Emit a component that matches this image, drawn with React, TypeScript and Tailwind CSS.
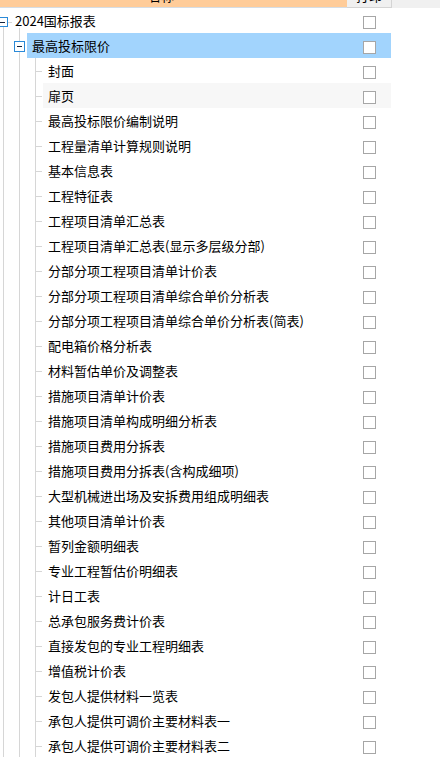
import React from "react";

const children = [
  "封面",
  "扉页",
  "最高投标限价编制说明",
  "工程量清单计算规则说明",
  "基本信息表",
  "工程特征表",
  "工程项目清单汇总表",
  "工程项目清单汇总表(显示多层级分部)",
  "分部分项工程项目清单计价表",
  "分部分项工程项目清单综合单价分析表",
  "分部分项工程项目清单综合单价分析表(简表)",
  "配电箱价格分析表",
  "材料暂估单价及调整表",
  "措施项目清单计价表",
  "措施项目清单构成明细分析表",
  "措施项目费用分拆表",
  "措施项目费用分拆表(含构成细项)",
  "大型机械进出场及安拆费用组成明细表",
  "其他项目清单计价表",
  "暂列金额明细表",
  "专业工程暂估价明细表",
  "计日工表",
  "总承包服务费计价表",
  "直接发包的专业工程明细表",
  "增值税计价表",
  "发包人提供材料一览表",
  "承包人提供可调价主要材料表一",
  "承包人提供可调价主要材料表二",
];

const LINE = "#d6d6d6";
const BOX = "#2b8ad8";
const MINUS = "#14233c";

function Checkbox() {
  return (
    <div className="w-[44px] shrink-0 pl-[16px]">
      <div className="mt-[4px] size-[13px] border border-[#a6a6a6] bg-white" />
    </div>
  );
}

function Label({ text }: { text: string }) {
  return (
    <span className="mt-[1px] flex-1 whitespace-nowrap pl-[5px] text-[13px] leading-[16px]">
      {text}
    </span>
  );
}

function RootGuide() {
  return (
    <svg width="15" height="25" className="shrink-0 overflow-visible" shapeRendering="crispEdges">
      <rect x="-1.5" y="9.5" width="9" height="9" fill="white" stroke={BOX} />
      <line x1="0" x2="5" y1="14.5" y2="14.5" stroke={MINUS} />
      <line x1="8" x2="12" y1="14.5" y2="14.5" stroke={LINE} />
      <line x1="3.5" x2="3.5" y1="19" y2="25" stroke={LINE} />
      <line x1="19.5" x2="19.5" y1="20" y2="25" stroke={LINE} />
    </svg>
  );
}

function GroupGuide() {
  return (
    <svg width="27" height="25" className="shrink-0" shapeRendering="crispEdges">
      <line x1="3.5" x2="3.5" y1="0" y2="25" stroke={LINE} />
      <line x1="19.5" x2="19.5" y1="0" y2="8" stroke={LINE} />
      <rect x="14.5" y="8.5" width="10" height="10" fill="white" stroke={BOX} />
      <line x1="17" x2="22" y1="13.5" y2="13.5" stroke={MINUS} />
      <line x1="19.5" x2="19.5" y1="19" y2="25" stroke={LINE} />
    </svg>
  );
}

function LeafGuide() {
  return (
    <svg width="43" height="25" className="shrink-0" shapeRendering="crispEdges">
      <line x1="3.5" x2="3.5" y1="0" y2="25" stroke={LINE} />
      <line x1="19.5" x2="19.5" y1="0" y2="25" stroke={LINE} />
      <line x1="35.5" x2="35.5" y1="0" y2="25" stroke={LINE} />
      <line x1="36" x2="42" y1="13.5" y2="13.5" stroke={LINE} />
    </svg>
  );
}

export default function App() {
  return (
    <div className="h-[757px] w-[440px] overflow-hidden bg-white text-black font-['Noto_Sans_CJK_SC','Noto_Sans',sans-serif]">
      {/* header (scrolled, only bottom visible) */}
      <div className="flex h-[8px]">
        <div className="w-[347px] shrink-0 overflow-hidden border-b border-[#d6dde4] bg-[#ffcc99]">
          <div className="mt-[-12px] pl-[148px] text-[13px] leading-[16px]">名称</div>
        </div>
        <div className="w-[45px] shrink-0 overflow-hidden border-r border-b border-[#d4d4d4] bg-[#f0f0f0]">
          <div className="mt-[-12px] text-center text-[13px] leading-[16px]">打印</div>
        </div>
        <div className="flex-1 bg-[#f0f0f0]" />
      </div>

      {/* root row */}
      <div className="flex h-[25px] w-[391px]">
        <RootGuide />
        <div className="flex flex-1 items-center">
          <span className="mt-[1px] flex-1 whitespace-nowrap text-[13px] leading-[16px]">2024国标报表</span>
          <Checkbox />
        </div>
      </div>

      {/* group row (selected) */}
      <div className="flex h-[25px] w-[391px]">
        <GroupGuide />
        <div className="flex flex-1 items-center bg-[#a2d4fd]">
          <Label text="最高投标限价" />
          <Checkbox />
        </div>
      </div>

      {children.map((c, i) => (
        <div key={c} className="flex h-[25px] w-[391px]">
          <LeafGuide />
          <div className={i === 1 ? "flex flex-1 items-center bg-[#f7f7f7]" : "flex flex-1 items-center"}>
            <Label text={c} />
            <Checkbox />
          </div>
        </div>
      ))}
    </div>
  );
}
